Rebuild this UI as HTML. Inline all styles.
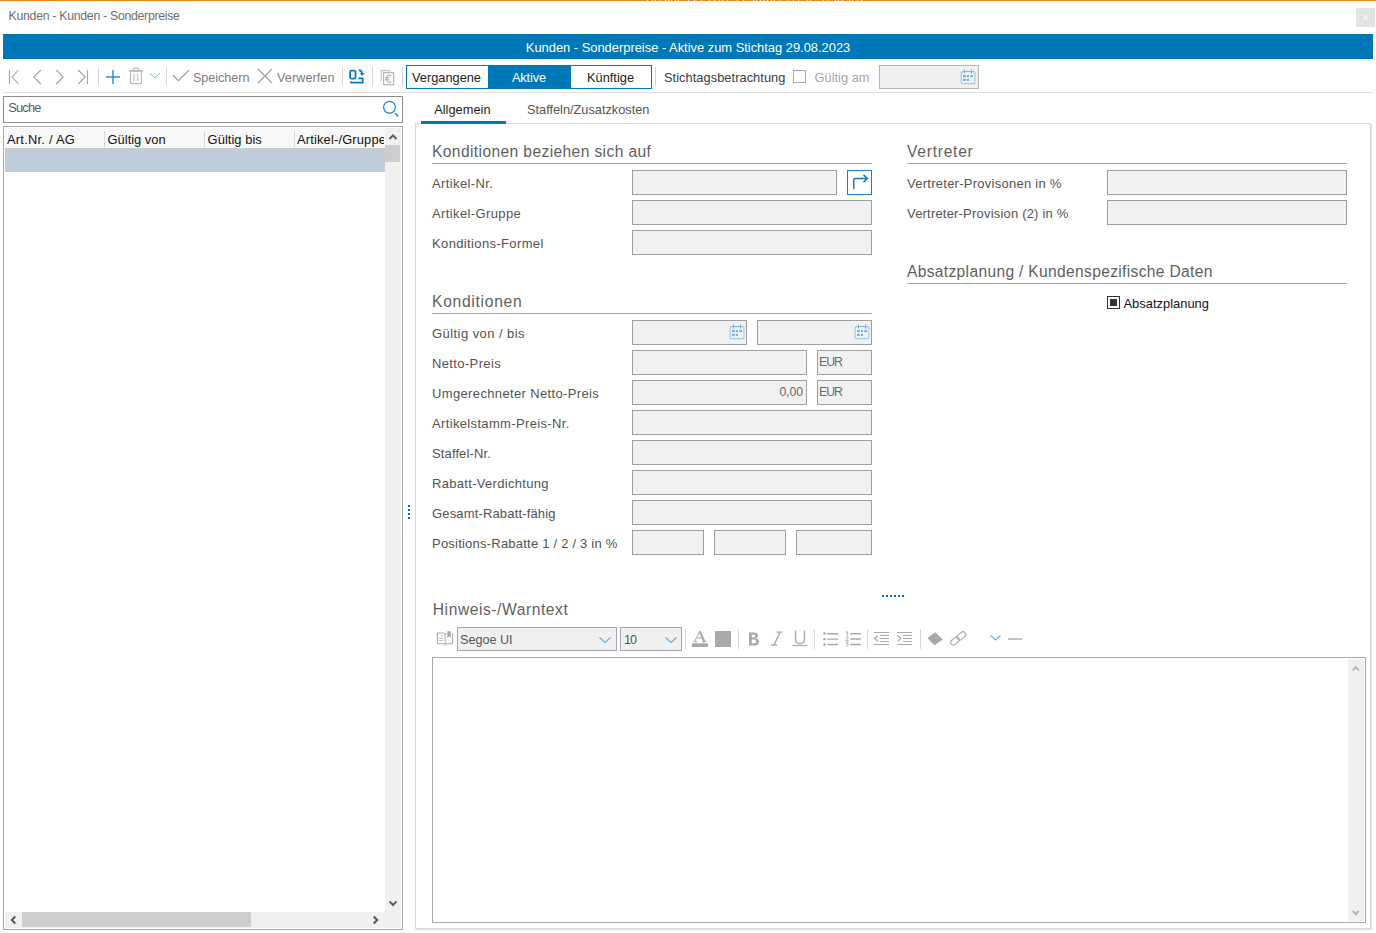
<!DOCTYPE html>
<html><head><meta charset="utf-8"><style>
html,body{margin:0;padding:0;}
body{width:1376px;height:933px;position:relative;overflow:hidden;background:#fff;font-family:"Liberation Sans",sans-serif;}
.a{position:absolute;}
.t{position:absolute;white-space:nowrap;font-family:"Liberation Sans",sans-serif;}
</style></head><body>
<div class="a" style="left:0px;top:0px;width:1376px;height:1px;background:#e8821e"></div>
<div class="a" style="left:647px;top:0px;width:1px;height:1px;background:#f8e2c4"></div>
<div class="a" style="left:652px;top:0px;width:1px;height:1px;background:#f8e2c4"></div>
<div class="a" style="left:655px;top:0px;width:1px;height:1px;background:#f8e2c4"></div>
<div class="a" style="left:659px;top:0px;width:1px;height:1px;background:#f8e2c4"></div>
<div class="a" style="left:665px;top:0px;width:1px;height:1px;background:#f8e2c4"></div>
<div class="a" style="left:668px;top:0px;width:1px;height:1px;background:#f8e2c4"></div>
<div class="a" style="left:671px;top:0px;width:1px;height:1px;background:#f8e2c4"></div>
<div class="a" style="left:675px;top:0px;width:1px;height:1px;background:#f8e2c4"></div>
<div class="a" style="left:678px;top:0px;width:1px;height:1px;background:#f8e2c4"></div>
<div class="a" style="left:688px;top:0px;width:1px;height:1px;background:#f8e2c4"></div>
<div class="a" style="left:694px;top:0px;width:1px;height:1px;background:#f8e2c4"></div>
<div class="a" style="left:701px;top:0px;width:1px;height:1px;background:#f8e2c4"></div>
<div class="a" style="left:709px;top:0px;width:1px;height:1px;background:#f8e2c4"></div>
<div class="a" style="left:714px;top:0px;width:1px;height:1px;background:#f8e2c4"></div>
<div class="a" style="left:719px;top:0px;width:1px;height:1px;background:#f8e2c4"></div>
<div class="a" style="left:722px;top:0px;width:1px;height:1px;background:#f8e2c4"></div>
<div class="a" style="left:727px;top:0px;width:1px;height:1px;background:#f8e2c4"></div>
<div class="a" style="left:737px;top:0px;width:1px;height:1px;background:#f8e2c4"></div>
<div class="a" style="left:743px;top:0px;width:1px;height:1px;background:#f8e2c4"></div>
<div class="a" style="left:753px;top:0px;width:1px;height:1px;background:#f8e2c4"></div>
<div class="a" style="left:756px;top:0px;width:1px;height:1px;background:#f8e2c4"></div>
<div class="a" style="left:760px;top:0px;width:1px;height:1px;background:#f8e2c4"></div>
<div class="a" style="left:764px;top:0px;width:1px;height:1px;background:#f8e2c4"></div>
<div class="a" style="left:767px;top:0px;width:1px;height:1px;background:#f8e2c4"></div>
<div class="a" style="left:771px;top:0px;width:1px;height:1px;background:#f8e2c4"></div>
<div class="a" style="left:774px;top:0px;width:1px;height:1px;background:#f8e2c4"></div>
<div class="a" style="left:779px;top:0px;width:1px;height:1px;background:#f8e2c4"></div>
<div class="a" style="left:787px;top:0px;width:1px;height:1px;background:#f8e2c4"></div>
<div class="a" style="left:793px;top:0px;width:1px;height:1px;background:#f8e2c4"></div>
<div class="a" style="left:798px;top:0px;width:1px;height:1px;background:#f8e2c4"></div>
<div class="a" style="left:807px;top:0px;width:1px;height:1px;background:#f8e2c4"></div>
<div class="a" style="left:810px;top:0px;width:1px;height:1px;background:#f8e2c4"></div>
<div class="a" style="left:823px;top:0px;width:1px;height:1px;background:#f8e2c4"></div>
<div class="a" style="left:827px;top:0px;width:1px;height:1px;background:#f8e2c4"></div>
<div class="a" style="left:835px;top:0px;width:1px;height:1px;background:#f8e2c4"></div>
<div class="a" style="left:838px;top:0px;width:1px;height:1px;background:#f8e2c4"></div>
<div class="a" style="left:842px;top:0px;width:1px;height:1px;background:#f8e2c4"></div>
<div class="a" style="left:849px;top:0px;width:1px;height:1px;background:#f8e2c4"></div>
<div class="a" style="left:852px;top:0px;width:1px;height:1px;background:#f8e2c4"></div>
<div class="a" style="left:857px;top:0px;width:1px;height:1px;background:#f8e2c4"></div>
<div class="a" style="left:861px;top:0px;width:1px;height:1px;background:#f8e2c4"></div>
<div class="t" style="left:8.60px;top:10px;font-size:12.3px;line-height:12.3px;color:#6e6e6e;letter-spacing:-0.291px;">Kunden - Kunden - Sonderpreise</div>
<div class="a" style="left:1356px;top:8px;width:19px;height:19px;background:#e3e3e3"></div>
<svg class="a" style="left:1356px;top:8px;" width="19" height="19" viewBox="0 0 19 19"><path d="M7.2 7L12 11.8M12 7L7.2 11.8" stroke="#f4f4f4" stroke-width="1.4"/></svg>
<div class="a" style="left:3px;top:34px;width:1370px;height:25px;background:#0078b8"></div>
<div class="t" style="left:525.80px;top:42px;font-size:12.9px;line-height:12.9px;color:#ffffff;letter-spacing:-0.003px;">Kunden - Sonderpreise - Aktive zum Stichtag 29.08.2023</div>
<svg class="a" style="left:8px;top:69px;" width="12" height="16" viewBox="0 0 12 16"><path d="M1.5 1V15M10.5 1L4 8L10.5 15" fill="none" stroke="#a3a3a3" stroke-width="1.1"/></svg>
<svg class="a" style="left:32px;top:69px;" width="10" height="16" viewBox="0 0 10 16"><path d="M8.8 1L1.8 8L8.8 15" fill="none" stroke="#a3a3a3" stroke-width="1.1"/></svg>
<svg class="a" style="left:55px;top:69px;" width="10" height="16" viewBox="0 0 10 16"><path d="M1.2 1L8.2 8L1.2 15" fill="none" stroke="#a3a3a3" stroke-width="1.1"/></svg>
<svg class="a" style="left:77px;top:69px;" width="12" height="16" viewBox="0 0 12 16"><path d="M1.2 1L8.2 8L1.2 15M10.5 1V15" fill="none" stroke="#a3a3a3" stroke-width="1.1"/></svg>
<div class="a" style="left:98px;top:67px;width:1px;height:19px;background:#d6d6d6"></div>
<svg class="a" style="left:105px;top:69px;" width="16" height="16" viewBox="0 0 16 16"><rect x="1" y="7" width="14" height="2" fill="#1f86c8" opacity="0.68"/><rect x="7" y="1" width="2" height="14" fill="#1f86c8" opacity="0.68"/></svg>
<svg class="a" style="left:128px;top:67px;" width="16" height="18" viewBox="0 0 16 18"><path d="M1 3.9H15" stroke="#bababa" stroke-width="1.8"/><path d="M5.3 3V2.6Q5.3 1.2 6.7 1.2H9.3Q10.7 1.2 10.7 2.6V3" fill="none" stroke="#bababa" stroke-width="1.2"/><path d="M2.5 5.2V15.3Q2.5 16.6 3.8 16.6H12.2Q13.5 16.6 13.5 15.3V5.2" fill="none" stroke="#b5b5b5" stroke-width="1.1"/><path d="M5.8 6.6V14M9.6 6.6V14" stroke="#cccccc" stroke-width="1.5"/></svg>
<svg class="a" style="left:149px;top:72px;" width="12" height="8" viewBox="0 0 12 8"><path d="M1 1.3L6 6L11 1.3" fill="none" stroke="#76b5de" stroke-width="1"/></svg>
<div class="a" style="left:166px;top:67px;width:1px;height:19px;background:#d6d6d6"></div>
<svg class="a" style="left:172px;top:69px;" width="18" height="13" viewBox="0 0 18 13"><path d="M1 6L6.5 11.6L17 1.2" fill="none" stroke="#969696" stroke-width="1.1"/></svg>
<div class="t" style="left:193.00px;top:72px;font-size:12.6px;line-height:12.6px;color:#7c7c7c;letter-spacing:-0.030px;">Speichern</div>
<svg class="a" style="left:257px;top:68px;" width="16" height="16" viewBox="0 0 16 16"><path d="M1 1L15 15M15 1L1 15" fill="none" stroke="#a0a0a0" stroke-width="1.2"/></svg>
<div class="t" style="left:277.00px;top:72px;font-size:12.6px;line-height:12.6px;color:#7c7c7c;letter-spacing:0.097px;">Verwerfen</div>
<div class="a" style="left:342px;top:67px;width:1px;height:19px;background:#d6d6d6"></div>
<svg class="a" style="left:348px;top:68px;" width="18" height="18" viewBox="0 0 18 18"><rect x="2.1" y="2.6" width="5.4" height="8" rx="1.4" fill="none" stroke="#0a7ac2" stroke-width="1.8"/><path d="M3.1 13.2V14.7H14.7V10.4H10.3" fill="none" stroke="#0a7ac2" stroke-width="1.8" stroke-linejoin="round"/><path d="M10.8 2.1Q13.6 2.3 14.2 5" fill="none" stroke="#0a7ac2" stroke-width="1.6"/><path d="M11.8 4.9H16.6L14.2 7.9Z" fill="#0a7ac2"/></svg>
<div class="a" style="left:372px;top:67px;width:1px;height:19px;background:#d6d6d6"></div>
<svg class="a" style="left:380px;top:69px;" width="15" height="17" viewBox="0 0 15 17"><path d="M1.2 12.5V1.7H10" fill="none" stroke="#b8b8b8" stroke-width="1"/><rect x="3.6" y="3.6" width="10" height="12" fill="none" stroke="#b8b8b8" stroke-width="1.3"/><path d="M11.3 6.8Q10.5 6 9.3 6Q6.6 6.2 6.6 9.8Q6.6 13.3 9.3 13.4Q10.5 13.4 11.3 12.6M5 8.7H9.5M5 10.7H9.5" fill="none" stroke="#b0b0b0" stroke-width="1.1"/></svg>
<div class="a" style="left:402px;top:67px;width:1px;height:19px;background:#d6d6d6"></div>
<div class="a" style="left:406px;top:65px;width:246px;height:24px;box-sizing:border-box;border:1px solid #0078b8;background:#fff"></div>
<div class="a" style="left:488px;top:66px;width:83px;height:22px;background:#0078b8"></div>
<div class="t" style="left:412.00px;top:72px;font-size:12.8px;line-height:12.8px;color:#1c1c1c;letter-spacing:-0.005px;">Vergangene</div>
<div class="t" style="left:512.00px;top:72px;font-size:12.8px;line-height:12.8px;color:#ffffff;letter-spacing:-0.171px;">Aktive</div>
<div class="t" style="left:587.00px;top:72px;font-size:12.8px;line-height:12.8px;color:#1c1c1c;letter-spacing:0.005px;">Künftige</div>
<div class="a" style="left:655px;top:67px;width:1px;height:19px;background:#d6d6d6"></div>
<div class="t" style="left:664.00px;top:72px;font-size:12.8px;line-height:12.8px;color:#3a3a3a;letter-spacing:0.060px;">Stichtagsbetrachtung</div>
<div class="a" style="left:793px;top:70px;width:13px;height:13px;box-sizing:border-box;border:1px solid #a9a9a9;background:#fff"></div>
<div class="t" style="left:814.50px;top:72px;font-size:12.8px;line-height:12.8px;color:#a4a4a4;letter-spacing:0.029px;">Gültig am</div>
<div class="a" style="left:879px;top:65px;width:100px;height:24px;box-sizing:border-box;border:1px solid #b4b4b4;background:#f0f0f0"></div>
<svg class="a" style="left:960px;top:69px;" width="17" height="17" viewBox="0 0 17 17"><path d="M1.2 4V13.4Q1.2 14.7 2.5 14.7H13.6Q14.9 14.7 14.9 13.4V4Q14.9 2.6 13.6 2.6" fill="none" stroke="#a6cfe8" stroke-width="1.3"/><path d="M1.5 4Q1.5 2.6 2.8 2.6H3.6M5.2 2.6H10.8M12.4 2.6H14" fill="none" stroke="#6eaed6" stroke-width="1"/><path d="M4.5 0.5V4.5M11.5 0.5V4.5" fill="none" stroke="#6eaed6" stroke-width="1.1"/><rect x="3" y="6.1" width="2.8" height="2" fill="#6eaed6"/><rect x="6.9" y="6.1" width="2.1" height="2" fill="#6eaed6"/><rect x="10.3" y="6.1" width="2.7" height="2" fill="#6eaed6"/><rect x="3" y="9.9" width="2.8" height="2" fill="#6eaed6"/><rect x="6.9" y="9.9" width="2.1" height="2" fill="#6eaed6"/></svg>
<div class="a" style="left:3px;top:92px;width:1370px;height:1px;background:#dedede"></div>
<div class="a" style="left:3px;top:96px;width:400px;height:27px;box-sizing:border-box;border:1px solid #8c8c8c;background:#fff"></div>
<div class="t" style="left:8.20px;top:102px;font-size:12.8px;line-height:12.8px;color:#5a5a5a;letter-spacing:-0.747px;">Suche</div>
<svg class="a" style="left:382px;top:99px;" width="19" height="20" viewBox="0 0 19 20"><circle cx="7.5" cy="8.3" r="5.9" fill="none" stroke="#1a84c8" stroke-width="1.2"/><path d="M12.9 13.9L16.4 17.4" stroke="#1a84c8" stroke-width="1.4"/></svg>
<div class="a" style="left:3px;top:126px;width:400px;height:804px;box-sizing:border-box;border:1px solid #a6a6ae;background:#fff"></div>
<div class="a" style="left:5px;top:128px;width:380px;height:20px;background:#f8f8f8"></div>
<div class="t" style="left:7.00px;top:134px;font-size:12.9px;line-height:12.9px;color:#111111;letter-spacing:0.233px;">Art.Nr. / AG</div>
<div class="a" style="left:104px;top:131px;width:1px;height:16px;background:#d8d8d8"></div>
<div class="t" style="left:107.60px;top:134px;font-size:12.9px;line-height:12.9px;color:#111111;letter-spacing:-0.008px;">Gültig von</div>
<div class="a" style="left:204px;top:131px;width:1px;height:16px;background:#d8d8d8"></div>
<div class="t" style="left:207.60px;top:134px;font-size:12.9px;line-height:12.9px;color:#111111;letter-spacing:0.048px;">Gültig bis</div>
<div class="a" style="left:294px;top:131px;width:1px;height:16px;background:#d8d8d8"></div>
<div class="a" style="left:297px;top:128px;width:87px;height:20px;overflow:hidden">
<div class="t" style="left:0.00px;top:6px;font-size:12.9px;line-height:12.9px;color:#111111;letter-spacing:0.161px;">Artikel-/Gruppe</div>
</div>
<div class="a" style="left:5px;top:148px;width:380px;height:24px;background:#bfccd9"></div>
<div class="a" style="left:5px;top:148px;width:380px;height:1px;background:#c8c8c8"></div>
<div class="a" style="left:385px;top:128px;width:16px;height:800px;background:#f0f0f0"></div>
<svg class="a" style="left:385px;top:131px;" width="15" height="10" viewBox="0 0 15 10"><path d="M4.5 8L8 4.3L11.5 8" fill="none" stroke="#5a5a5a" stroke-width="1.9"/></svg>
<div class="a" style="left:385px;top:145px;width:15px;height:17px;background:#cdcdcd"></div>
<svg class="a" style="left:385px;top:897px;" width="15" height="12" viewBox="0 0 15 12"><path d="M4.5 4.3L8 8L11.5 4.3" fill="none" stroke="#5a5a5a" stroke-width="1.9"/></svg>
<div class="a" style="left:5px;top:912px;width:380px;height:16px;background:#f0f0f0"></div>
<div class="a" style="left:22px;top:912px;width:229px;height:15px;background:#cdcdcd"></div>
<svg class="a" style="left:8px;top:913px;" width="10" height="14" viewBox="0 0 10 14"><path d="M7.2 3.5L3.8 7L7.2 10.5" fill="none" stroke="#555" stroke-width="1.9"/></svg>
<svg class="a" style="left:371px;top:913px;" width="10" height="14" viewBox="0 0 10 14"><path d="M2.8 3.5L6.2 7L2.8 10.5" fill="none" stroke="#555" stroke-width="1.9"/></svg>
<div class="a" style="left:408px;top:505px;width:2px;height:2px;background:#0066b3"></div>
<div class="a" style="left:408px;top:509px;width:2px;height:2px;background:#0066b3"></div>
<div class="a" style="left:408px;top:513px;width:2px;height:2px;background:#0066b3"></div>
<div class="a" style="left:408px;top:517px;width:2px;height:2px;background:#0066b3"></div>
<div class="a" style="left:415px;top:123px;width:956px;height:806px;box-sizing:border-box;border:1px solid #d9d9d9;background:#fff;box-shadow:1px 1px 0 #e4e4e4,2px 2px 0 #f2f2f2"></div>
<div class="t" style="left:434.20px;top:104px;font-size:12.8px;line-height:12.8px;color:#1c1c1c;letter-spacing:0.024px;">Allgemein</div>
<div class="a" style="left:421px;top:121px;width:85px;height:3px;background:#0078b8"></div>
<div class="t" style="left:527.00px;top:104px;font-size:12.8px;line-height:12.8px;color:#555555;letter-spacing:-0.018px;">Staffeln/Zusatzkosten</div>
<div class="t" style="left:432.00px;top:144px;font-size:15.6px;line-height:15.6px;color:#5f5f5f;letter-spacing:0.386px;">Konditionen beziehen sich auf</div>
<div class="a" style="left:432px;top:163px;width:440px;height:1px;background:#a3a3a3"></div>
<div class="t" style="left:432.00px;top:177px;font-size:13px;line-height:13px;color:#525252;letter-spacing:0.384px;">Artikel-Nr.</div>
<div class="a" style="left:632px;top:170px;width:205px;height:25px;box-sizing:border-box;border:1px solid #9e9e9e;background:#f1f1f1"></div>
<div class="a" style="left:847px;top:170px;width:25px;height:25px;box-sizing:border-box;border:1px solid #1a7fc6;background:#fff"></div>
<svg class="a" style="left:847px;top:170px;" width="25" height="25" viewBox="0 0 25 25"><path d="M6.8 19.3V9.8Q6.8 8.5 8.1 8.5H20.3M16.5 4.9L20.3 8.5L16.5 12.1" fill="none" stroke="#0d7bc0" stroke-width="1.45"/></svg>
<div class="t" style="left:432.00px;top:207px;font-size:13px;line-height:13px;color:#525252;letter-spacing:0.384px;">Artikel-Gruppe</div>
<div class="a" style="left:632px;top:200px;width:240px;height:25px;box-sizing:border-box;border:1px solid #9e9e9e;background:#f1f1f1"></div>
<div class="t" style="left:432.00px;top:237px;font-size:13px;line-height:13px;color:#525252;letter-spacing:0.364px;">Konditions-Formel</div>
<div class="a" style="left:632px;top:230px;width:240px;height:25px;box-sizing:border-box;border:1px solid #9e9e9e;background:#f1f1f1"></div>
<div class="t" style="left:432.00px;top:294px;font-size:15.6px;line-height:15.6px;color:#5f5f5f;letter-spacing:0.730px;">Konditionen</div>
<div class="a" style="left:432px;top:313px;width:440px;height:1px;background:#a3a3a3"></div>
<div class="t" style="left:432.00px;top:327px;font-size:13px;line-height:13px;color:#525252;letter-spacing:0.441px;">Gültig von / bis</div>
<div class="a" style="left:632px;top:320px;width:115px;height:25px;box-sizing:border-box;border:1px solid #9e9e9e;background:#f1f1f1"></div>
<div class="a" style="left:757px;top:320px;width:115px;height:25px;box-sizing:border-box;border:1px solid #9e9e9e;background:#f1f1f1"></div>
<svg class="a" style="left:729px;top:324px;" width="17" height="17" viewBox="0 0 17 17"><path d="M1.2 4V13.4Q1.2 14.7 2.5 14.7H13.6Q14.9 14.7 14.9 13.4V4Q14.9 2.6 13.6 2.6" fill="none" stroke="#a6cfe8" stroke-width="1.3"/><path d="M1.5 4Q1.5 2.6 2.8 2.6H3.6M5.2 2.6H10.8M12.4 2.6H14" fill="none" stroke="#6eaed6" stroke-width="1"/><path d="M4.5 0.5V4.5M11.5 0.5V4.5" fill="none" stroke="#6eaed6" stroke-width="1.1"/><rect x="3" y="6.1" width="2.8" height="2" fill="#6eaed6"/><rect x="6.9" y="6.1" width="2.1" height="2" fill="#6eaed6"/><rect x="10.3" y="6.1" width="2.7" height="2" fill="#6eaed6"/><rect x="3" y="9.9" width="2.8" height="2" fill="#6eaed6"/><rect x="6.9" y="9.9" width="2.1" height="2" fill="#6eaed6"/></svg>
<svg class="a" style="left:854px;top:324px;" width="17" height="17" viewBox="0 0 17 17"><path d="M1.2 4V13.4Q1.2 14.7 2.5 14.7H13.6Q14.9 14.7 14.9 13.4V4Q14.9 2.6 13.6 2.6" fill="none" stroke="#a6cfe8" stroke-width="1.3"/><path d="M1.5 4Q1.5 2.6 2.8 2.6H3.6M5.2 2.6H10.8M12.4 2.6H14" fill="none" stroke="#6eaed6" stroke-width="1"/><path d="M4.5 0.5V4.5M11.5 0.5V4.5" fill="none" stroke="#6eaed6" stroke-width="1.1"/><rect x="3" y="6.1" width="2.8" height="2" fill="#6eaed6"/><rect x="6.9" y="6.1" width="2.1" height="2" fill="#6eaed6"/><rect x="10.3" y="6.1" width="2.7" height="2" fill="#6eaed6"/><rect x="3" y="9.9" width="2.8" height="2" fill="#6eaed6"/><rect x="6.9" y="9.9" width="2.1" height="2" fill="#6eaed6"/></svg>
<div class="t" style="left:432.00px;top:357px;font-size:13px;line-height:13px;color:#525252;letter-spacing:0.367px;">Netto-Preis</div>
<div class="a" style="left:632px;top:350px;width:175px;height:25px;box-sizing:border-box;border:1px solid #9e9e9e;background:#f1f1f1"></div>
<div class="a" style="left:817px;top:350px;width:55px;height:25px;box-sizing:border-box;border:1px solid #9e9e9e;background:#f1f1f1"></div>
<div class="t" style="left:819.00px;top:356px;font-size:12.3px;line-height:12.3px;color:#6a6a6a;letter-spacing:-0.983px;">EUR</div>
<div class="t" style="left:432.00px;top:387px;font-size:13px;line-height:13px;color:#525252;letter-spacing:0.357px;">Umgerechneter Netto-Preis</div>
<div class="a" style="left:632px;top:380px;width:175px;height:25px;box-sizing:border-box;border:1px solid #9e9e9e;background:#f1f1f1"></div>
<div class="a" style="left:817px;top:380px;width:55px;height:25px;box-sizing:border-box;border:1px solid #9e9e9e;background:#f1f1f1"></div>
<div class="t" style="left:779.40px;top:386px;font-size:12.3px;line-height:12.3px;color:#6a6a6a;letter-spacing:-0.112px;">0,00</div>
<div class="t" style="left:819.00px;top:386px;font-size:12.3px;line-height:12.3px;color:#6a6a6a;letter-spacing:-0.983px;">EUR</div>
<div class="t" style="left:432.00px;top:417px;font-size:13px;line-height:13px;color:#525252;letter-spacing:0.347px;">Artikelstamm-Preis-Nr.</div>
<div class="a" style="left:632px;top:410px;width:240px;height:25px;box-sizing:border-box;border:1px solid #9e9e9e;background:#f1f1f1"></div>
<div class="t" style="left:432.00px;top:447px;font-size:13px;line-height:13px;color:#525252;letter-spacing:0.124px;">Staffel-Nr.</div>
<div class="a" style="left:632px;top:440px;width:240px;height:25px;box-sizing:border-box;border:1px solid #9e9e9e;background:#f1f1f1"></div>
<div class="t" style="left:432.00px;top:477px;font-size:13px;line-height:13px;color:#525252;letter-spacing:0.312px;">Rabatt-Verdichtung</div>
<div class="a" style="left:632px;top:470px;width:240px;height:25px;box-sizing:border-box;border:1px solid #9e9e9e;background:#f1f1f1"></div>
<div class="t" style="left:432.00px;top:507px;font-size:13px;line-height:13px;color:#525252;letter-spacing:0.157px;">Gesamt-Rabatt-fähig</div>
<div class="a" style="left:632px;top:500px;width:240px;height:25px;box-sizing:border-box;border:1px solid #9e9e9e;background:#f1f1f1"></div>
<div class="t" style="left:432.00px;top:537px;font-size:13px;line-height:13px;color:#525252;letter-spacing:0.220px;">Positions-Rabatte 1 / 2 / 3 in %</div>
<div class="a" style="left:632px;top:530px;width:72px;height:25px;box-sizing:border-box;border:1px solid #9e9e9e;background:#f1f1f1"></div>
<div class="a" style="left:714px;top:530px;width:72px;height:25px;box-sizing:border-box;border:1px solid #9e9e9e;background:#f1f1f1"></div>
<div class="a" style="left:796px;top:530px;width:76px;height:25px;box-sizing:border-box;border:1px solid #9e9e9e;background:#f1f1f1"></div>
<div class="t" style="left:907.00px;top:144px;font-size:15.6px;line-height:15.6px;color:#5f5f5f;letter-spacing:0.747px;">Vertreter</div>
<div class="a" style="left:907px;top:163px;width:440px;height:1px;background:#a3a3a3"></div>
<div class="t" style="left:907.00px;top:177px;font-size:13px;line-height:13px;color:#525252;letter-spacing:0.262px;">Vertreter-Provisonen in %</div>
<div class="a" style="left:1107px;top:170px;width:240px;height:25px;box-sizing:border-box;border:1px solid #9e9e9e;background:#f1f1f1"></div>
<div class="t" style="left:907.00px;top:207px;font-size:13px;line-height:13px;color:#525252;letter-spacing:0.194px;">Vertreter-Provision (2) in %</div>
<div class="a" style="left:1107px;top:200px;width:240px;height:25px;box-sizing:border-box;border:1px solid #9e9e9e;background:#f1f1f1"></div>
<div class="t" style="left:907.00px;top:264px;font-size:15.6px;line-height:15.6px;color:#5f5f5f;letter-spacing:0.325px;">Absatzplanung / Kundenspezifische Daten</div>
<div class="a" style="left:907px;top:283px;width:440px;height:1px;background:#a3a3a3"></div>
<div class="a" style="left:1107px;top:296px;width:13px;height:13px;box-sizing:border-box;border:1px solid #333;background:#fff"></div>
<div class="a" style="left:1110px;top:299px;width:7px;height:7px;background:#333"></div>
<div class="t" style="left:1123.50px;top:298px;font-size:12.9px;line-height:12.9px;color:#111111;letter-spacing:0.013px;">Absatzplanung</div>
<div class="a" style="left:882px;top:595px;width:2px;height:2px;background:#0066b3"></div>
<div class="a" style="left:886px;top:595px;width:2px;height:2px;background:#0066b3"></div>
<div class="a" style="left:890px;top:595px;width:2px;height:2px;background:#0066b3"></div>
<div class="a" style="left:894px;top:595px;width:2px;height:2px;background:#0066b3"></div>
<div class="a" style="left:898px;top:595px;width:2px;height:2px;background:#0066b3"></div>
<div class="a" style="left:902px;top:595px;width:2px;height:2px;background:#0066b3"></div>
<div class="t" style="left:432.80px;top:602px;font-size:15.6px;line-height:15.6px;color:#5f5f5f;letter-spacing:0.563px;">Hinweis-/Warntext</div>
<svg class="a" style="left:436px;top:630px;" width="18" height="18" viewBox="0 0 18 18"><path d="M8.3 3H1.5V13.8H16.5V3.3" fill="none" stroke="#ababab" stroke-width="1.1"/><rect x="8.3" y="3.5" width="1.9" height="10" fill="#d2d2d2"/><rect x="8.3" y="3" width="1.9" height="1.3" fill="#b0b0b0"/><path d="M11.3 1.2H14.8V7.8L13.05 6.6L11.3 7.8Z" fill="#a9a9a9"/><path d="M5 5.6H7M3.1 8.3H7M3.1 10.6H7" stroke="#b4b4b4" stroke-width="1"/><path d="M7.8 14.3H11.2L9.5 15.9Z" fill="#b8b8b8"/></svg>
<div class="a" style="left:457px;top:627px;width:160px;height:24px;box-sizing:border-box;border:1px solid #a6a6ae;background:#f0f0f0"></div>
<div class="t" style="left:460.00px;top:634px;font-size:12.6px;line-height:12.6px;color:#555555;letter-spacing:0.010px;">Segoe UI</div>
<svg class="a" style="left:598px;top:636px;" width="14" height="8" viewBox="0 0 14 8"><path d="M1.5 1.5L7 6.5L12.5 1.5" fill="none" stroke="#6aaedc" stroke-width="1.1"/></svg>
<div class="a" style="left:620px;top:627px;width:62px;height:24px;box-sizing:border-box;border:1px solid #a6a6ae;background:#f0f0f0"></div>
<div class="t" style="left:624.00px;top:634px;font-size:12.6px;line-height:12.6px;color:#555555;letter-spacing:-1.011px;">10</div>
<svg class="a" style="left:664px;top:636px;" width="14" height="8" viewBox="0 0 14 8"><path d="M1.5 1.5L7 6.5L12.5 1.5" fill="none" stroke="#6aaedc" stroke-width="1.1"/></svg>
<div class="a" style="left:685px;top:629px;width:1px;height:20px;background:#d6d6d6"></div>
<svg class="a" style="left:691px;top:630px;" width="18" height="18" viewBox="0 0 18 18"><path d="M3.5 11.8L8.8 1.2L14.2 11.8" fill="none" stroke="#a9a9a9" stroke-width="1"/><path d="M8.8 1.5L13.3 11.8" stroke="#a9a9a9" stroke-width="2"/><path d="M5.8 7.8H11.8" stroke="#a9a9a9" stroke-width="1"/><path d="M2.5 11.8H6.5M11 11.8H15.5" stroke="#a9a9a9" stroke-width="1.1"/><rect x="1" y="13.3" width="16" height="3.7" fill="#a9a9a9"/></svg>
<div class="a" style="left:715px;top:631px;width:16px;height:16px;background:#a9a9a9"></div>
<div class="a" style="left:738px;top:629px;width:1px;height:20px;background:#d6d6d6"></div>
<svg class="a" style="left:746px;top:631px;" width="16" height="16" viewBox="0 0 16 16"><path d="M3 1.5H8.5Q12 1.5 12 4.5Q12 7 9 7.3Q13 7.5 13 10.7Q13 14.5 8.5 14.5H3Z M5.8 3.8V6.4H8.3Q9.3 6.4 9.3 5.1Q9.3 3.8 8.3 3.8Z M5.8 8.6V12.2H8.5Q10.2 12.2 10.2 10.4Q10.2 8.6 8.5 8.6Z" fill="#a9a9a9" fill-rule="evenodd"/></svg>
<svg class="a" style="left:769px;top:631px;" width="16" height="16" viewBox="0 0 16 16"><path d="M7.5 1.2H13.5M2.2 14H8.2" fill="none" stroke="#a9a9a9" stroke-width="1.3"/><path d="M10.8 1.5L5 14" stroke="#a9a9a9" stroke-width="1.5"/></svg>
<svg class="a" style="left:791px;top:630px;" width="18" height="18" viewBox="0 0 18 18"><path d="M4.5 0.5V9.5Q4.5 13.5 9 13.5Q13.5 13.5 13.5 9.5V0.5" fill="none" stroke="#a9a9a9" stroke-width="1.3"/><path d="M1.5 15.5H16.5" stroke="#a9a9a9" stroke-width="1.2"/></svg>
<div class="a" style="left:814px;top:629px;width:1px;height:20px;background:#d6d6d6"></div>
<svg class="a" style="left:822px;top:631px;" width="18" height="16" viewBox="0 0 18 16"><circle cx="2.5" cy="2.5" r="1.3" fill="#a9a9a9"/><circle cx="2.5" cy="8" r="1.3" fill="#a9a9a9"/><circle cx="2.5" cy="13.5" r="1.3" fill="#a9a9a9"/><path d="M5.3 2.8H16M5.3 8.1H16M5.3 13.5H16" stroke="#a9a9a9" stroke-width="1.4"/></svg>
<svg class="a" style="left:845px;top:631px;" width="17" height="16" viewBox="0 0 17 16"><path d="M0.9 1.4L2.3 0.6V4.9" fill="none" stroke="#a9a9a9" stroke-width="1"/><path d="M0.8 6.5Q2.2 5.6 3.1 6.4Q3.6 7.4 0.8 9.7H3.7" fill="none" stroke="#a9a9a9" stroke-width="0.9"/><path d="M0.8 11.2H3.2L1.9 12.6Q3.6 12.8 3.4 14Q2.9 15.4 0.8 14.8" fill="none" stroke="#a9a9a9" stroke-width="0.9"/><path d="M5.3 2.8H15.9M5.3 8.1H15.9M5.3 13.5H15.9" stroke="#a9a9a9" stroke-width="1.5"/></svg>
<div class="a" style="left:867px;top:629px;width:1px;height:20px;background:#d6d6d6"></div>
<svg class="a" style="left:873px;top:631px;" width="18" height="16" viewBox="0 0 18 16"><path d="M1 1.5H16M7 4.5H16M7 7.5H16M7 10.5H16M1 13.5H16" stroke="#a9a9a9" stroke-width="1"/><path d="M4.8 4.5L1.6 7.5L4.8 10.5" fill="none" stroke="#a9a9a9" stroke-width="1.1"/></svg>
<svg class="a" style="left:896px;top:631px;" width="18" height="16" viewBox="0 0 18 16"><path d="M1 1.5H16M7 4.5H16M7 7.5H16M7 10.5H16M1 13.5H16" stroke="#a9a9a9" stroke-width="1"/><path d="M1.6 4.5L4.8 7.5L1.6 10.5" fill="none" stroke="#a9a9a9" stroke-width="1.1"/></svg>
<div class="a" style="left:920px;top:629px;width:1px;height:20px;background:#d6d6d6"></div>
<svg class="a" style="left:926px;top:630px;" width="18" height="18" viewBox="0 0 18 18"><path d="M9.3 2.2L16.8 9.5L8.5 15.2L1.3 8Z" fill="#a9a9a9"/></svg>
<svg class="a" style="left:950px;top:630px;" width="18" height="18" viewBox="0 0 18 18"><g transform="translate(5 11) rotate(-40)"><rect x="-4.8" y="-2.7" width="9.6" height="5.4" rx="2.7" fill="none" stroke="#a9a9a9" stroke-width="1.15"/></g><g transform="translate(11.3 5.9) rotate(-40)"><rect x="-4.8" y="-2.7" width="9.6" height="5.4" rx="2.7" fill="none" stroke="#a9a9a9" stroke-width="1.15"/></g></svg>
<svg class="a" style="left:989px;top:634px;" width="14" height="8" viewBox="0 0 14 8"><path d="M1.5 1.5L6.5 6L11.5 1.5" fill="none" stroke="#6aaedc" stroke-width="1.1"/></svg>
<div class="a" style="left:1008px;top:638px;width:14px;height:2px;background:#c4c4c4"></div>
<div class="a" style="left:432px;top:657px;width:934px;height:266px;box-sizing:border-box;border:1px solid #a6a8b0;background:#fff"></div>
<div class="a" style="left:1348px;top:659px;width:16px;height:262px;background:#f0f0f0"></div>
<svg class="a" style="left:1348px;top:662px;" width="16" height="12" viewBox="0 0 16 12"><path d="M4.7 8.3L7.7 5.2L10.7 8.3" fill="none" stroke="#b4b4b4" stroke-width="1.9"/></svg>
<svg class="a" style="left:1348px;top:906px;" width="16" height="12" viewBox="0 0 16 12"><path d="M4.7 5L7.7 8.1L10.7 5" fill="none" stroke="#b4b4b4" stroke-width="1.9"/></svg>
</body></html>
